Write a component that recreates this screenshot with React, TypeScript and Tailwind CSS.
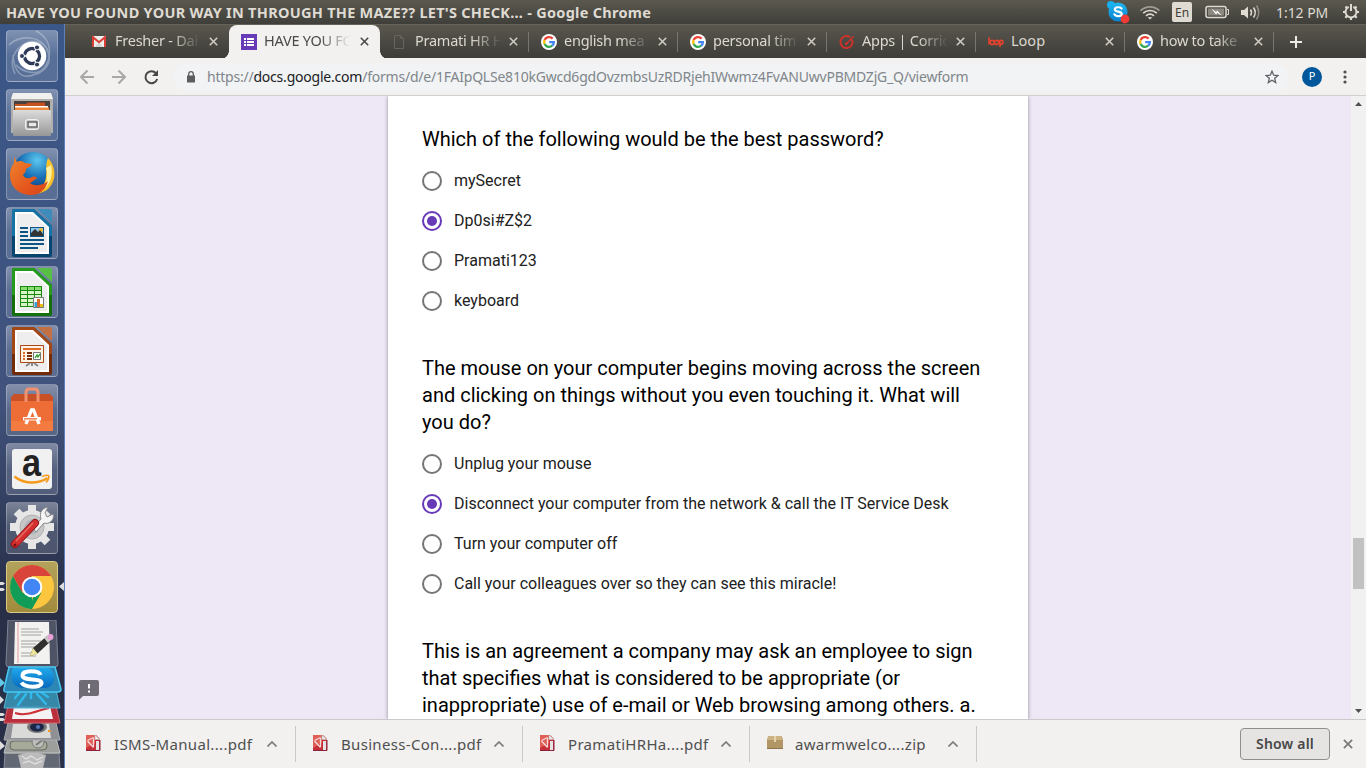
import React from "react";

const UI = "font-['Noto_Sans','Open_Sans',sans-serif]";

/* ---------- small icons ---------- */

const Google = () => (
  <svg width="16" height="16" viewBox="0 0 16 16">
    <circle cx="8" cy="8" r="8" fill="#fff" />
    <g fill="none" strokeWidth="2.3">
      <path d="M11.6 4.6A4.9 4.9 0 0 0 3.6 5.9" stroke="#ea4335" />
      <path d="M3.6 5.9a4.9 4.9 0 0 0 0 4.2" stroke="#fbbc05" />
      <path d="M3.6 10.1a4.9 4.9 0 0 0 7.6 1.6" stroke="#34a853" />
      <path d="M11.2 11.7A4.9 4.9 0 0 0 12.9 8.2H8.2" stroke="#4285f4" />
    </g>
  </svg>
);

const Gmail = () => (
  <svg width="16" height="16" viewBox="0 0 16 16">
    <path d="M0 2h14v11H0z" fill="#eee" />
    <path d="M3 13l4-4.5 4 4.5z" fill="#d5d5d5" />
    <path d="M1 13V3.200l6 5 6-5V13" fill="none" stroke="#d93f35" strokeWidth="2" />
  </svg>
);

const Forms = () => (
  <svg width="16" height="16" viewBox="0 0 16 16">
    <path d="M0 0h16v16H0z" fill="#673ab7" />
    <path d="M3 4h2v2H3zM6 4h7v2H6zM3 7h2v2H3zM6 7h7v2H6zM3 10h2v2H3zM6 10h7v2H6z" fill="#fff" />
  </svg>
);

const Page = () => (
  <svg width="16" height="16" viewBox="0 0 16 16" fill="none" stroke="#66645e">
    <path d="M2.500 1.500h6l3 3v10h-9zM8.500 1.500v3h3" />
  </svg>
);

const Gauge = () => (
  <svg width="16" height="16" viewBox="0 0 16 16" fill="none" stroke="#d3302b">
    <path d="M11 3.200A6 6 0 1 0 13 5.700" strokeWidth="1.900" />
    <path d="M6.500 11L14.500 2.200" strokeWidth="1.400" />
    <circle cx="7.300" cy="9.700" r="1" fill="#d3302b" />
  </svg>
);

const LoopIcon = () => (
  <svg width="16" height="16" viewBox="0 0 16 16" fill="none" stroke="#e5432f" strokeWidth="1.600">
    <path d="M1 3.200v7.200M12 7v6" />
    <circle cx="4.200" cy="8.400" r="2" />
    <circle cx="8.500" cy="8.400" r="2" />
    <circle cx="13" cy="8.200" r="2" />
  </svg>
);

const Cross = ({ color, size = 9 }: { color: string; size?: number }) => (
  <svg width={size} height={size} viewBox="0 0 9 9" stroke={color} strokeWidth="1.600">
    <path d="M.8.8l7.400 7.400M8.200.8L.8 8.200" />
  </svg>
);

/* ---------- top panel ---------- */

const TopPanel = () => (
  <div className="flex h-6 shrink-0 items-center bg-linear-to-b from-[#5b594f] to-[#3f3e39]">
    <div className="flex-1 pl-1.5 text-[14.5px] leading-6 font-bold tracking-[0.28px] whitespace-nowrap text-[#dfdbd2]">
      HAVE YOU FOUND YOUR WAY IN THROUGH THE MAZE?? LET'S CHECK... - Google Chrome
    </div>
    <svg className="shrink-0" width="166" height="24" viewBox="1106 0 166 24">
      <defs>
        <linearGradient id="sky" x1="0" y1="0" x2="0" y2="1">
          <stop offset="0" stopColor="#20b9f2" />
          <stop offset="1" stopColor="#087fcc" />
        </linearGradient>
      </defs>
      <circle cx="1111" cy="5" r="4" fill="#16b0ee" />
      <circle cx="1118" cy="12" r="9.600" fill="url(#sky)" />
      <path d="M1121.600 8.600c-1-1.900-6.800-1.900-6.800.8 0 2.900 7 1.600 7 4.600 0 2.800-6.300 2.800-7.400.3" fill="none" stroke="#fff" strokeWidth="2.200" strokeLinecap="round" />
      <circle cx="1125" cy="19" r="4.400" fill="#f23b34" />
      <g fill="none" stroke="#dfdbd2" strokeWidth="1.700">
        <path d="M1140.500 10.600c5.600-5 13.400-5 19 0" opacity=".55" />
        <path d="M1143.200 13.200c4-3.600 9.600-3.600 13.600 0" />
        <path d="M1146 15.900c2.400-2 5.600-2 8 0" />
      </g>
      <path d="M1147.600 17.200h4.800l-2.400 2.300z" fill="#dfdbd2" />
      <rect x="1172" y="2" width="20" height="20" rx="2" fill="#dfdbd2" />
      <text x="1182" y="17" textAnchor="middle" fontSize="12" fill="#3f3e39" className="font-['Noto_Sans']">En</text>
      <rect x="1206" y="6.500" width="20" height="11" rx="2" fill="none" stroke="#dfdbd2" strokeWidth="1.500" />
      <path d="M1227 9.500h1.500v5h-1.500" fill="none" stroke="#dfdbd2" />
      <path d="M1208 8.500h16v7h-16z" fill="#8b8880" />
      <path d="M1211.500 8.500l4.800 3.800.7-2 5 5.500-5-3-.8 2z" fill="#fff" />
      <path d="M1241 10h3l4-3.500v12l-4-3.500h-3z" fill="#dfdbd2" />
      <g fill="none" stroke="#dfdbd2" strokeWidth="1.500">
        <path d="M1250.500 9.500q2 3 0 6" />
        <path d="M1253.500 7.500q3.500 5 0 10" />
        <path d="M1256.500 5.500q4.500 7 0 14" opacity=".45" />
      </g>
    </svg>
    <div className="ml-1 w-[54px] shrink-0 text-[14px] tracking-[-0.05px] whitespace-nowrap text-[#dfdbd2]">1:12 PM</div>
    <svg className="mr-1.5 ml-3 shrink-0" width="18" height="18" viewBox="0 0 18 18" fill="none" stroke="#dfdbd2">
      <path d="M6.700 3.900a5.500 5.500 0 1 0 4.600 0" strokeWidth="2" />
      <path d="M9 1v7" strokeWidth="2" />
      <path d="M3.500 3.500l1.700 1.700M14.500 3.500l-1.700 1.700M1 9h2.500M17 9h-2.500M3.300 14.700L5 13M14.700 14.700L13 13M9 17v-2.500" strokeWidth="2.200" />
    </svg>
  </div>
);

/* ---------- launcher ---------- */

const Tile = ({ children, gold }: { children: React.ReactNode; gold?: boolean }) => (
  <div
    className={
      gold
        ? "size-[52px] shrink-0 rounded-[4px] border border-[#d9ca87] bg-linear-to-b from-[#b3a25c] to-[#a18b3c]"
        : "size-[52px] shrink-0 rounded-[4px] border border-white/25 bg-linear-to-b from-white/35 via-white/15 to-white/15"
    }
  >
    <svg className="-m-px block" width="52" height="52" viewBox="0 0 52 52">
      {children}
    </svg>
  </div>
);

const OfficeDoc = ({ dark, mid, light, children }: { dark: string; mid: string; light: string; children: React.ReactNode }) => (
  <>
    <path d="M8 2h20l18 17v29q0 2-2 2H8q-2 0-2-2V4q0-2 2-2z" fill={dark} />
    <path d="M8 2h20l18 17v10H6V4q0-2 2-2z" fill={mid} />
    <path d="M31 2h13q2 0 2 2v12z" fill={light} />
    <path d="M9 5h18l16 15v27H9z" fill="#fff" />
    <path d="M11 7h15l15 14v24H11z" fill="#eeeeee" />
    {children}
  </>
);

const Launcher = () => (
  <div className="flex h-full w-[65px] shrink-0 flex-col items-start gap-[7px] overflow-hidden border-r border-[#5c80b8] bg-linear-to-b from-[#3a5788] from-0% via-[#41537d] via-50% to-[#282f47] to-78% pt-1.5 pl-1.5">
    <Tile>
      <g fill="none" stroke="#fff" opacity=".3" strokeWidth="1.500">
        <path d="M3 15C15 3 40 6 43 25S22 48 10 35" />
        <path d="M9 44C0 24 18 8 32 12s16 25-1 32" />
        <path d="M30 1c20 10 16 36 0 43S8 40 7 25" />
      </g>
      <circle cx="26" cy="26" r="14.300" fill="#fff" />
      <circle cx="26" cy="26" r="7.500" fill="none" stroke="#2f3a58" strokeWidth="3.400" />
      <path d="M26 26h-12M26 26l6-10.400M26 26l6 10.400" stroke="#fff" strokeWidth="1.300" />
      <circle cx="26" cy="26" r="5.600" fill="#fff" />
      <g fill="#2f3a58" stroke="#fff">
        <circle cx="16" cy="26" r="2.500" />
        <circle cx="31" cy="17.400" r="2.500" />
        <circle cx="31" cy="34.600" r="2.500" />
      </g>
    </Tile>
    <Tile>
      <defs>
        <linearGradient id="cab" x1="0" y1="0" x2="0" y2="1">
          <stop offset="0" stopColor="#dcdcdc" />
          <stop offset="1" stopColor="#979797" />
        </linearGradient>
      </defs>
      <path d="M7 4h38l2 6v34H5V10z" fill="#b0b0ae" />
      <path d="M7 4h38l2 6H5z" fill="#f0f0ee" />
      <path d="M8 12h36v10H8z" fill="#48413d" />
      <path d="M9 15h11l2-1.500h17V21H9z" fill="#c4521e" />
      <path d="M9 17h33v2H9z" fill="#fff" />
      <path d="M9 18.500h34V22H9z" fill="#f08a3c" />
      <rect x="7" y="21" width="38" height="26" rx="1" fill="url(#cab)" />
      <rect x="19.500" y="30.500" width="13" height="10" rx="2" fill="#c9c9c9" stroke="#f2f2f2" />
      <rect x="22" y="33" width="9" height="5" fill="#e9e9e9" stroke="#555" strokeWidth="1.300" />
    </Tile>
    <Tile>
      <defs>
        <radialGradient id="globe" cx=".6" cy=".2" r=".8">
          <stop offset="0" stopColor="#5cc7ef" />
          <stop offset=".5" stopColor="#1a72b8" />
          <stop offset="1" stopColor="#0d2f6b" />
        </radialGradient>
        <linearGradient id="fox" x1="0" y1="0" x2="1" y2="1">
          <stop offset="0" stopColor="#f0842c" />
          <stop offset=".6" stopColor="#e4571d" />
          <stop offset="1" stopColor="#d9431a" />
        </linearGradient>
      </defs>
      <circle cx="27" cy="25" r="21" fill="url(#globe)" />
      <path d="M42 10c8 8 9 22 1 30-6 6-14 6-17 5 9-3 14-10 14-17 1-7-1-11 2-18z" fill="#f7c02b" />
      <path d="M45 17c2 9 0 18-6 23 2-7 3-14 1-20z" fill="#fff0a0" />
      <path d="M8 9l3 5c3-2 6-1 8 1l7 1c-1 3-5 4-6 5 0 4-2 4-3 6 2 4 6 4 9 2 3-1 5 0 5 2-3 0-4 3-7 4 5 4 14 2 18-2-3 10-9 14-17 14C12 47 4 38 4 27c0-6 2-9 4-12z" fill="url(#fox)" />
    </Tile>
    <Tile>
      <OfficeDoc dark="#06456e" mid="#1573a5" light="#3f8cba">
        <path d="M14 20h8v2h-8zM14 24h8v2h-8zM14 28h8v2h-8zM14 32h24v2H14zM14 36h24v2H14zM14 40h18v2H14z" fill="#0e5484" />
        <path d="M24 20h14v10H24z" fill="#0e5484" />
        <path d="M25 21h12v8H25z" fill="#8ec7ea" />
        <circle cx="35" cy="23" r="2" fill="#f0c030" />
        <path d="M25 29v-3l4-4 3 3 2-2 3 4v2z" fill="#333" />
      </OfficeDoc>
    </Tile>
    <Tile>
      <OfficeDoc dark="#15700c" mid="#259a1c" light="#58bf45">
        <path d="M14 20h22v21H14z" fill="#178a0e" />
        <path d="M15 21h6v3h-6zM22 21h6v3h-6zM29 21h6v3h-6z" fill="#8bdc72" />
        <path d="M15 25h6v3h-6zM22 25h6v3h-6zM29 25h6v3h-6zM15 29h6v3h-6zM22 29h6v3h-6zM29 29h6v3h-6zM15 33h6v3h-6zM22 33h6v3h-6zM15 37h6v3h-6zM22 37h6v3h-6z" fill="#d8f4c8" />
        <path d="M27.500 31.500h10v10h-10z" fill="#fff" stroke="#777" />
        <path d="M28.500 36h2.500v5h-2.500z" fill="#329ed8" />
        <path d="M31 33h3v8h-3z" fill="#d8692b" />
        <path d="M34 38h3v3h-3z" fill="#f0bd18" />
      </OfficeDoc>
    </Tile>
    <Tile>
      <OfficeDoc dark="#742b08" mid="#a34716" light="#c27044">
        <path d="M14.500 20.500h23v17h-23z" fill="#fff3e6" stroke="#ab4814" />
        <path d="M17 23h18v2H17zM17 27h2v2h-2zM17 30h2v2h-2zM17 33h2v2h-2z" fill="#e06b26" />
        <path d="M21 27h5v2h-5zM21 30h5v2h-5zM21 33h5v2h-5z" fill="#79300c" />
        <path d="M27.500 27.500h7v7h-7z" fill="#fff" stroke="#777" />
        <path d="M29 33l2-3 1 2 2-3" fill="none" stroke="#289222" strokeWidth="1.300" />
        <path d="M24 38l-4 3M28 38l4 3M26 38v3" stroke="#888" strokeWidth="2" />
      </OfficeDoc>
    </Tile>
    <Tile>
      <path d="M5 13h42v34H5z" fill="#ee6c35" />
      <path d="M5 37h42v10H5z" fill="#f47b40" />
      <path d="M5 13l3-3h36l3 3v4H5z" fill="#c95128" />
      <path d="M20 18V9q0-4 3-4h6q3 0 3 4v9" fill="none" stroke="#f2916e" strokeWidth="3" />
      <path d="M20 40l5.500-14h2L33 40" fill="none" stroke="#fff" strokeWidth="3.300" />
      <path d="M17 33h18v3.500H17z" fill="#fff" />
      <path d="M18 34.200h13v1.300H18z" fill="#ee6c35" />
    </Tile>
    <Tile>
      <rect x="6" y="6" width="40" height="40" rx="3" fill="#f1f1f1" />
      <text transform="translate(25.500 33) scale(.88 1)" textAnchor="middle" fontSize="39" fontWeight="700" fill="#222" className="font-['Liberation_Sans']">a</text>
      <path d="M8.500 33.500c9 7.500 23 8 33 1.500" fill="none" stroke="#f79a1c" strokeWidth="2.500" />
      <path d="M36 33.500q7-2.500 7 0t-3 6" fill="none" stroke="#f79a1c" strokeWidth="1.700" />
    </Tile>
    <Tile>
      <g stroke="#e6e6e6" strokeWidth="8">
        <path d="M26 3v44M4 25h44M10.500 9.500l31 31M41.500 9.500l-31 31" />
      </g>
      <circle cx="26" cy="25" r="17" fill="#e6e6e6" />
      <circle cx="26" cy="25" r="12" fill="#c7c7c7" stroke="#b1b1b1" />
      <circle cx="26" cy="25" r="7.500" fill="#b0b5be" />
      <path d="M27 26l8-9c-2-6 1-11 7-12l-3 6 2 4 6-3c2 6-4 11-9 9l-8 9z" fill="#f4f4f4" stroke="#888" />
      <path d="M9 42L29 21" stroke="#8c1414" strokeWidth="8" strokeLinecap="round" />
      <path d="M9 42L29 21" stroke="#d32f2f" strokeWidth="6.200" strokeLinecap="round" />
      <path d="M10 39L27 21" stroke="#e96b64" strokeWidth="1.500" />
      <circle cx="9" cy="43" r="1.500" fill="#701010" />
    </Tile>
    <div className="relative">
      <Tile gold>
        <circle cx="26" cy="26" r="22" fill="#fdc63f" />
        <path d="M7 15l9.500 16.500L26 36v12A22 22 0 0 1 7 15z" fill="#119c58" />
        <path d="M35.500 31.500L26 48l-2-.1L27 36z" fill="#119c58" />
        <path d="M7 15A22 22 0 0 1 45 15H26L16 31z" fill="#d8443a" />
        <circle cx="26" cy="26" r="10.300" fill="#fff" />
        <circle cx="26" cy="26" r="8.300" fill="#4285f4" />
      </Tile>
      <svg className="absolute top-[20px] -left-1.5" width="65" height="12" viewBox="0 0 65 12" fill="#ddd">
        <path d="M0 1h3l2 1.500L3 4H0zM0 7h3l2 1.500L3 10H0zM64 1v9l-5-4.500z" />
      </svg>
    </div>
    <svg className="-ml-1.5 block shrink-0" width="65" height="148" viewBox="0 620 65 148">
      <defs>
        <linearGradient id="skt" x1="0" y1="0" x2="0" y2="1">
          <stop offset="0" stopColor="#20a9ec" />
          <stop offset="1" stopColor="#0869be" />
        </linearGradient>
      </defs>
      <path d="M8 620h48l2 44q0 3-3 3H9q-3 0-3-3z" fill="#636878" fillOpacity=".65" stroke="#7e8292" />
      <path d="M15 622h34l1 42H14z" fill="#f2f2f0" />
      <path d="M18 622v41" stroke="#e89b9b" />
      <path d="M21 629h18M21 632h22M21 635h20M21 641h20M21 644h15M21 647h18M21 653h12M21 656h15" stroke="#999" strokeWidth=".9" />
      <path d="M30 656l3-8 14-12 4 5-14 13z" fill="#30302f" />
      <path d="M30 656l3-8 5 6z" fill="#ede49a" />
      <path d="M44 638l4-3 4 4-4 4z" fill="#c9c9c9" />
      <circle cx="50.500" cy="637" r="3" fill="#e7a1d3" />
      <path d="M5 753h54l1 15H4z" fill="#636875" stroke="#8a8e99" />
      <path d="M18 755q14-5 28 0l-3 13H21z" fill="#bbb" />
      <path d="M22 756l4 3 5-3 6 4 6-3M23 763l6-2 6 3 7-3" stroke="#dcdcdc" strokeWidth="1.500" fill="none" />
      <path d="M8 738h48l4 15H4z" fill="#9c9f9b" stroke="#c2c4bf" />
      <rect x="10" y="741" width="37" height="9" rx="4" fill="#a6aa99" stroke="#686b63" />
      <circle cx="38" cy="742" r="6" fill="#bdbeb9" stroke="#777" />
      <path d="M36 745l9-7" stroke="#7b7b78" strokeWidth="2" />
      <path d="M8 723h48l4 17H4z" fill="#8e9095" stroke="#acaeb1" />
      <path d="M13 724h36l2 14H11z" fill="#dadad8" />
      <ellipse cx="37" cy="727" rx="10" ry="6" fill="#777" />
      <ellipse cx="37" cy="727" rx="7" ry="4.500" fill="#1c2647" />
      <circle cx="38" cy="727" r="2" fill="#5577b8" />
      <path d="M48 730h3v2h-3z" fill="#eb9b2e" />
      <path d="M8 706h48l4 17H4z" fill="#b92f3c" stroke="#d86069" />
      <path d="M14 706h36l3 13H12z" fill="#f4f2f2" />
      <path d="M15 713c12 4 23-3 34-5" fill="none" stroke="#cf3038" strokeWidth="2" />
      <path d="M8 690h48l4 18H4z" fill="#368dae" fillOpacity=".95" stroke="#58b6d5" />
      <path d="M31 690v8M20 692l-5 6M41 692l7 5M26 694l-8 11M37 694l9 10" stroke="#31b9ed" strokeWidth="2.400" strokeLinecap="round" />
      <path d="M9 667h46l6 22q0 3-3 3H7q-4 0-3-3z" fill="#2c87b7" stroke="#48c8f3" strokeWidth="1.500" />
      <path d="M13 668h36q4 2 5 9 1 9-8 11H22q-9-1-10-9-1-7 1-11z" fill="url(#skt)" />
      <path d="M40.500 675c-1.500-5-18-5-18 .5 0 6 19 2 19 7.500 0 5-17 5-20-.5" fill="none" stroke="#fff" strokeWidth="4" />
      <path d="M0 678l5 5-5 4z" fill="#65c7e8" />
      <path d="M0 696l4 4-4 4zM0 713h3l2 1.500-2 1.500H0zM0 718h3l2 1.500-2 1.500H0zM0 741l5 5-5 4z" fill="#ddd" />
    </svg>
  </div>
);

/* ---------- tab strip ---------- */

type TabData = { title: string; icon: React.ReactNode; active?: boolean; sep?: boolean; fade?: boolean };

const tabs: TabData[] = [
  { title: "Fresher - Dai", icon: <Gmail />, fade: true },
  { title: "HAVE YOU FO", icon: <Forms />, active: true, fade: true },
  { title: "Pramati HR H", icon: <Page />, sep: true, fade: true },
  { title: "english mea", icon: <Google />, sep: true, fade: true },
  { title: "personal tim", icon: <Google />, sep: true, fade: true },
  { title: "Apps | Corric", icon: <Gauge />, sep: true, fade: true },
  { title: "Loop", icon: <LoopIcon />, sep: true },
  { title: "how to take", icon: <Google />, sep: true, fade: true },
];

const Tab = ({ t }: { t: TabData }) => (
  <div
    className={
      t.active
        ? "relative flex h-[34px] w-[151px] items-center rounded-t-lg bg-[#f2f1ef] pl-3 text-[#4a4a4a]"
        : "relative flex h-[34px] w-[149px] items-center pl-3 text-[#dcd8cf]"
    }
  >
    {t.active && (
      <>
        <div className="absolute bottom-0 -left-2 h-2 w-2 bg-[radial-gradient(circle_at_0_0,transparent_7.5px,#f2f1ef_8px)]" />
        <div className="absolute -right-2 bottom-0 h-2 w-2 bg-[radial-gradient(circle_at_100%_0,transparent_7.5px,#f2f1ef_8px)]" />
      </>
    )}
    {t.icon}
    <div
      className={
        t.fade
          ? "ml-[7px] w-[88px] overflow-hidden pb-0.5 text-[14.5px] tracking-[-0.25px] whitespace-nowrap [mask-image:linear-gradient(to_right,#000_64%,transparent_98%)]"
          : "ml-[7px] w-[88px] overflow-hidden pb-0.5 text-[14.5px] whitespace-nowrap"
      }
    >
      {t.title}
    </div>
    <div className={t.active ? "ml-2" : "ml-1.5"}>
      <Cross color={t.active ? "#4a4a4a" : "#cfcbc2"} />
    </div>
    {t.sep && <div className="ml-auto h-5 w-px bg-[#77756d]" />}
  </div>
);

const TabStrip = () => (
  <div className="flex h-[34px] shrink-0 items-center border-t border-[#66645a] bg-linear-to-b from-[#59574e] to-[#3d3c38] pl-[15px]">
    {tabs.map((t) => (
      <Tab key={t.title} t={t} />
    ))}
    <svg className="ml-[16px]" width="12" height="12" viewBox="0 0 12 12" stroke="#eeebe4" strokeWidth="2">
      <path d="M6 0v12M0 6h12" />
    </svg>
  </div>
);

const Toolbar = () => (
  <div className="flex h-[38px] shrink-0 items-center border-b border-[#d1cfd0] bg-[#f2f1ef] pl-[14px]">
    <svg width="80" height="16" viewBox="0 0 80 16" fill="none" stroke="#a9a8a7" strokeWidth="2">
      <path d="M15 8H2.500M8.500 1.500L2 8l6.500 6.500M33 8h12.500M39.500 1.500L46 8l-6.500 6.500" />
      <path d="M77 4.200A6 6 0 1 0 78.200 10" stroke="#474747" />
      <path d="M79 1v6h-6z" fill="#474747" stroke="none" />
    </svg>
    <div className="ml-[14px] flex h-7 w-[1116px] items-center rounded-full bg-[#f1f3f4] pl-[14px]">
      <svg width="8" height="12" viewBox="0 0 8 12">
        <path d="M0 4.500h8V11q0 .5-.5.5h-7Q0 11.500 0 11z" fill="#5b5d60" />
        <path d="M1.700 5V3a2.300 2.300 0 0 1 4.600 0v2" fill="none" stroke="#5b5d60" strokeWidth="1.300" />
      </svg>
      <div className="ml-3 w-[1058px] text-[14px] tracking-[-0.22px] whitespace-nowrap text-[#80868b]">
        https://<span className="text-[#202124]">docs.google.com</span>
        /forms/d/e/1FAIpQLSe810kGwcd6gdOvzmbsUzRDRjehIWwmz4FvANUwvPBMDZjG_Q/viewform
      </div>
      <svg width="14" height="14" viewBox="0 0 14 14" fill="none" stroke="#5f6368" strokeWidth="1.300">
        <path d="M7 1.200l1.700 4 4.300.3-3.300 2.800 1 4.200L7 10.200l-3.700 2.300 1-4.200L1 5.500l4.300-.3z" />
      </svg>
    </div>
    <div className="ml-[13px] flex size-5 items-center justify-center rounded-full bg-[#01579b] text-[11px] text-white">P</div>
    <svg className="ml-[21px]" width="4" height="14" viewBox="0 0 4 14" fill="#4f4f4f">
      <circle cx="2" cy="2" r="1.600" />
      <circle cx="2" cy="7" r="1.600" />
      <circle cx="2" cy="12" r="1.600" />
    </svg>
  </div>
);

/* ---------- form ---------- */

const Option = ({ label, checked }: { label: string; checked?: boolean }) => (
  <div className="flex h-10 items-center">
    <div
      className={
        checked
          ? "flex size-5 items-center justify-center rounded-full border-2 border-[#673ab7]"
          : "size-5 rounded-full border-2 border-[#757575]"
      }
    >
      {checked && <div className="size-2.5 rounded-full bg-[#673ab7]" />}
    </div>
    <div className="ml-3 text-[16px] leading-5 whitespace-nowrap text-[#212121]">{label}</div>
  </div>
);

const Question = ({ lines, children }: { lines: string[]; children?: React.ReactNode }) => (
  <div className="mb-[34px]">
    <div className="mb-2 text-[20px] leading-[27px] text-black">
      {lines.map((l) => (
        <div key={l} className="whitespace-nowrap">
          {l}
        </div>
      ))}
    </div>
    {children}
  </div>
);

const Content = () => (
  <div className="flex min-h-0 flex-1 overflow-hidden bg-[#ede7f6]">
    <div className="flex w-[323px] items-end pb-[19px] pl-[14px]">
      <svg width="20" height="20" viewBox="0 0 20 20">
        <path d="M2 0h16q2 0 2 2v12q0 2-2 2H4l-4 4V2q0-2 2-2z" fill="#706c75" />
        <path d="M9 4h2v4.500H9zM9 10.500h2v2H9z" fill="#fff" />
      </svg>
    </div>
    <div className="w-[640px] overflow-hidden bg-white pt-[30px] pl-[34px] font-[Roboto,sans-serif] shadow-[0_1px_4px_rgba(0,0,0,0.4)]">
      <Question lines={["Which of the following would be the best password?"]}>
        <Option label="mySecret" />
        <Option label="Dp0si#Z$2" checked />
        <Option label="Pramati123" />
        <Option label="keyboard" />
      </Question>
      <Question
        lines={[
          "The mouse on your computer begins moving across the screen",
          "and clicking on things without you even touching it. What will",
          "you do?",
        ]}
      >
        <Option label="Unplug your mouse" />
        <Option label="Disconnect your computer from the network & call the IT Service Desk" checked />
        <Option label="Turn your computer off" />
        <Option label="Call your colleagues over so they can see this miracle!" />
      </Question>
      <Question
        lines={[
          "This is an agreement a company may ask an employee to sign",
          "that specifies what is considered to be appropriate (or",
          "inappropriate) use of e-mail or Web browsing among others. a.",
        ]}
      />
    </div>
    <div className="ml-auto flex w-[15px] flex-col items-center bg-[#f1f1f1] pt-[6px] pb-[6px]">
      <svg width="7" height="4" viewBox="0 0 7 4">
        <path d="M0 4l3.500-4L7 4z" fill="#505050" />
      </svg>
      <div className="mt-[432px] h-[51px] w-[11px] bg-[#c1c1c1]" />
      <svg className="mt-auto" width="7" height="4" viewBox="0 0 7 4">
        <path d="M0 0h7L3.500 4z" fill="#505050" />
      </svg>
    </div>
  </div>
);

/* ---------- downloads ---------- */

const Pdf = () => (
  <svg className="mb-0.5" width="16" height="16" viewBox="0 0 16 16">
    <path d="M0 0h10l4 4v12H0z" fill="#c72f38" />
    <path d="M0 0h9v8L0 13z" fill="#e06058" />
    <path d="M1.500 5.500L7.500 2.500M1.500 6l6 6.500M7.500 3v9" fill="none" stroke="#f6dada" strokeWidth="1.300" />
    <path d="M9 0l5 4.500H9z" fill="#eee" stroke="#b9b9b9" strokeWidth=".6" />
    <path d="M10 6h3v9h-3z" fill="#e4e4e4" />
    <path d="M0 15.500h14V5" fill="none" stroke="#88223c" />
  </svg>
);

const Zip = () => (
  <svg className="mb-0.5" width="16" height="16" viewBox="0 0 16 16">
    <path d="M1.500 1h13L16 4.500V13q0 1-1 1H1q-1 0-1-1V4.500z" fill="#b39666" />
    <path d="M1.500 1h13L16 5H0z" fill="#cdb283" />
    <path d="M7 1h2v6H7z" fill="#e6d4ae" />
    <path d="M0 13.500h16" stroke="#8c744d" />
  </svg>
);

const files = [
  { name: "ISMS-Manual....pdf", icon: <Pdf /> },
  { name: "Business-Con....pdf", icon: <Pdf /> },
  { name: "PramatiHRHa....pdf", icon: <Pdf /> },
  { name: "awarmwelco....zip", icon: <Zip /> },
];

const Downloads = () => (
  <div className="flex h-[49px] shrink-0 items-center border-t border-[#cbc9cc] bg-[#f2f1ef] pl-1">
    {files.map((f) => (
      <div key={f.name} className="flex h-9 w-[227px] items-center border-r border-[#cccac8] pl-[17px]">
        {f.icon}
        <div className="ml-3 w-[140px] text-[15px] tracking-[0.32px] whitespace-nowrap text-[#4f4f4f]">{f.name}</div>
        <svg className="ml-[13px]" width="10" height="6" viewBox="0 0 10 6" fill="none" stroke="#7a7a7a" strokeWidth="1.600">
          <path d="M.5 5.500L5 1l4.500 4.500" />
        </svg>
      </div>
    ))}
    <div className="mr-[13px] ml-auto flex h-8 w-[90px] items-center justify-center rounded-[4px] border border-[#8f8f8d] bg-[#e5e4e2] pb-0.5 text-[14px] font-semibold tracking-[0.2px] text-[#484848]">
      Show all
    </div>
    <div className="mr-[13px]">
      <Cross color="#7a7a7a" size={10} />
    </div>
  </div>
);

export default function App() {
  return (
    <div className={`flex h-[768px] w-[1366px] flex-col overflow-hidden ${UI}`}>
      <TopPanel />
      <div className="flex min-h-0 flex-1">
        <Launcher />
        <div className="flex min-w-0 flex-1 flex-col">
          <TabStrip />
          <Toolbar />
          <Content />
          <Downloads />
        </div>
      </div>
    </div>
  );
}
